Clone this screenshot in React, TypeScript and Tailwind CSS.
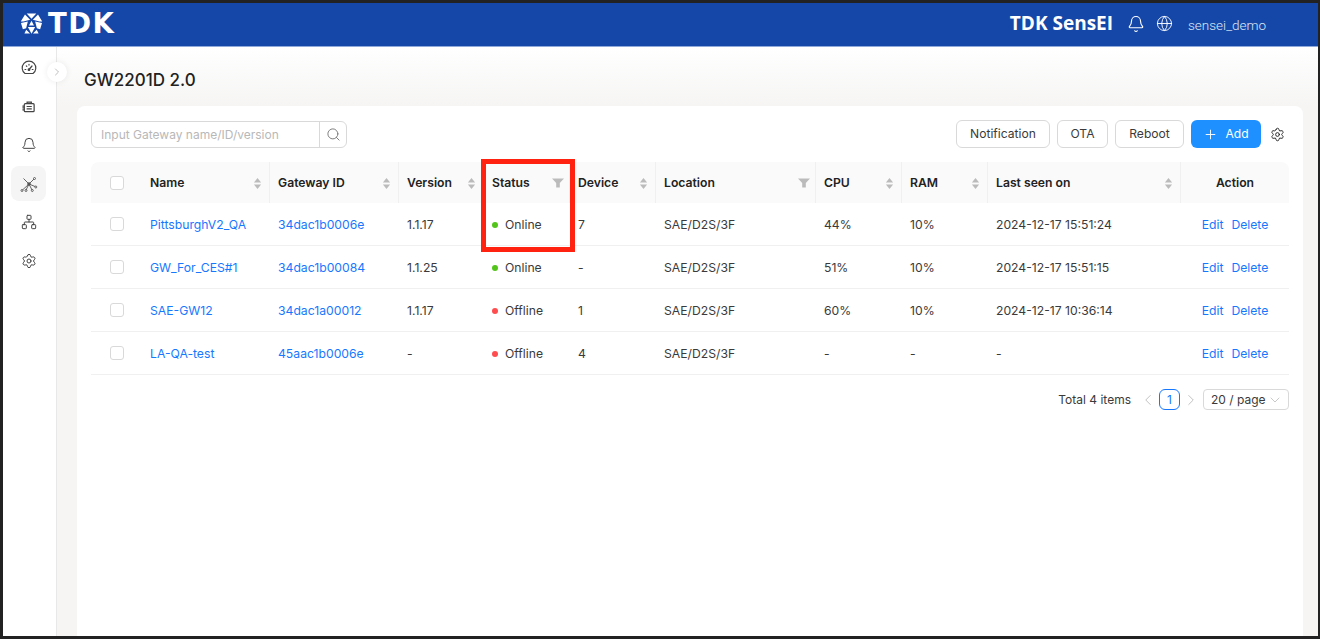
import { Bell, ChevronDown, ChevronLeft, ChevronRight, Globe, Network, Plus, Search, Settings } from "lucide-react"

const inter = "font-['Inter',sans-serif]"

const columns = [
  { title: "Name", width: "w-[128px]", sort: true },
  { title: "Gateway ID", width: "w-[129px]", sort: true },
  { title: "Version", width: "w-[85px]", sort: true },
  { title: "Status", width: "w-[86px]", filter: true },
  { title: "Device", width: "w-[86px]", sort: true },
  { title: "Location", width: "w-[160px]", filter: true },
  { title: "CPU", width: "w-[86px]", sort: true },
  { title: "RAM", width: "w-[86px]", sort: true },
  { title: "Last seen on", width: "w-[193px]", sort: true },
]

const rows = [
  { name: "PittsburghV2_QA", id: "34dac1b0006e", version: "1.1.17", online: true, device: "7", cpu: "44%", ram: "10%", seen: "2024-12-17 15:51:24" },
  { name: "GW_For_CES#1", id: "34dac1b00084", version: "1.1.25", online: true, device: "-", cpu: "51%", ram: "10%", seen: "2024-12-17 15:51:15" },
  { name: "SAE-GW12", id: "34dac1a00012", version: "1.1.17", online: false, device: "1", cpu: "60%", ram: "10%", seen: "2024-12-17 10:36:14" },
  { name: "LA-QA-test", id: "45aac1b0006e", version: "-", online: false, device: "4", cpu: "-", ram: "-", seen: "-" },
]

function TdkMark() {
  return (
    <svg viewBox="0 0 24 24" className="w-[23px] h-[23px] text-white" fill="currentColor">
      <path d="M7 1.500h10l-5 5.500zM5.200 2.600l5.400 5.600-7 1.600-2.800.2zM18.800 2.600l-5.400 5.600 7 1.600 2.800.2zM1 11.500l7.200-1.600L6.400 17 3 18zM23 11.500l-7.200-1.600 1.800 7.100 3.400 1zM12 9l2.600 5H9.400zM8.200 15.600h7.600l-3.800 7zM6.500 18.400l4 4.100H4.600zM17.500 18.400l-4 4.100h5.900z" />
    </svg>
  )
}

function GaugeIcon() {
  return (
    <svg viewBox="0 0 16 16" className="w-[16px] h-[16px] text-[#444]" fill="none" stroke="currentColor" strokeWidth="1.200" strokeLinecap="round">
      <path d="M4 13.500a6.800 6.800 0 1 1 8 0z" />
      <path d="M8 9.500l3-3.500M4 9.500h.8M11.200 9.500h.8M5.300 5.800l.5.500M8 4.400v.7" />
      <circle cx="8" cy="9.700" r=".8" fill="currentColor" />
    </svg>
  )
}

function GatewayIcon() {
  return (
    <svg viewBox="0 0 16 16" className="w-[15px] h-[15px] text-[#444]" fill="none" stroke="currentColor" strokeWidth="1.300">
      <rect x="3.500" y="5" width="10.500" height="8.500" rx="1" />
      <path d="M6.500 5V3.300h4.500V5M1.500 7.500h2M1.500 9.500h2M1.500 11.500h2M6 8h5.500M6 10.500h5.500" />
    </svg>
  )
}

function TopologyIcon() {
  return (
    <svg viewBox="0 0 18 18" className="w-[18px] h-[18px] text-[#555]" fill="none" stroke="currentColor" strokeWidth="0.900">
      <path d="M3.500 3.500 9 9M14 4 9 9M2.500 15 9 9M6 15l3-6M12 15 9 9M15 11.500 9 9" />
      <circle cx="9" cy="9" r="1.300" fill="currentColor" />
      <circle cx="14.500" cy="3.500" r="1" />
      <circle cx="2" cy="15.500" r="1" />
      <circle cx="6" cy="15.500" r="1" />
      <circle cx="12.300" cy="15.500" r="1" />
      <circle cx="15.800" cy="12" r="1" />
    </svg>
  )
}

function SortCarets() {
  return (
    <svg viewBox="0 0 10 14" className="w-[9px] h-[13px] -mr-[1px] text-[#bbbbbb]" fill="currentColor">
      <path d="M5 1l4 5H1zM5 13 1 8h8z" />
    </svg>
  )
}

function FilterIcon() {
  return (
    <svg viewBox="0 0 12 10" className="w-[12px] h-[10px] -mr-[3px] text-[#bbbbbb]" fill="currentColor">
      <path d="M0 .500h12L7.800 5v4.500H4.200V5z" />
    </svg>
  )
}

function Checkbox() {
  return <span className="block w-[14px] h-[14px] rounded-[3px] border border-[#d9d9d9] bg-white" />
}

function SideItem({ children, active }: { children: React.ReactNode; active?: boolean }) {
  return (
    <div className={`w-[35px] h-[35px] rounded-lg flex items-center justify-center ${active ? "bg-[#f5f5f5]" : ""}`}>
      {children}
    </div>
  )
}

export default function App() {
  return (
    <div className={`w-[1320px] h-[639px] overflow-hidden bg-[#222222] pt-[3px] pl-[3px] pr-[2px] pb-[3px] ${inter}`}>
      <div className="h-full flex flex-col bg-white">
        <header className="h-[44px] shrink-0 bg-[#1447a8] border-b border-[#8fa9da] flex items-center justify-between pl-[17px] pr-[52px] pb-[2px]">
          <div className="flex items-center gap-[5px]">
            <TdkMark />
            <span className="font-['DejaVu_Sans',sans-serif] font-bold text-[27.500px] leading-none tracking-[1.500px] text-white">TDK</span>
          </div>
          <div className="flex items-center text-white">
            <span className="font-['Open_Sans',sans-serif] font-bold text-[19px] mr-[14px]">TDK SensEI</span>
            <Bell className="w-[18px] h-[18px] mr-[11px]" strokeWidth={1.500} />
            <Globe className="w-[17px] h-[17px] mr-[15px]" strokeWidth={1.300} />
            <span className="mt-[3px] font-['Roboto',sans-serif] font-light text-[13.500px] text-[#dfe7f6]">sensei_demo</span>
          </div>
        </header>

        <div className="flex-1 flex min-h-0 relative">
          <aside className="w-[54px] shrink-0 bg-white border-r border-[#e8e8e8] flex flex-col items-center pt-[3.500px] pr-[2px]">
            <div className="flex flex-col items-center gap-[3.500px]">
              <SideItem><GaugeIcon /></SideItem>
              <SideItem><GatewayIcon /></SideItem>
              <SideItem><Bell className="w-[16px] h-[16px] text-[#444]" strokeWidth={1.500} /></SideItem>
              <SideItem active><TopologyIcon /></SideItem>
              <SideItem><Network className="w-[16px] h-[16px] text-[#444]" strokeWidth={1.500} /></SideItem>
              <SideItem><Settings className="w-[16px] h-[16px] text-[#444]" strokeWidth={1.500} /></SideItem>
            </div>
          </aside>

          <button className="absolute left-[44px] top-[15px] w-[20px] h-[20px] rounded-full bg-white shadow-[0_0_6px_rgba(0,0,0,0.08)] flex items-center justify-center">
            <ChevronRight className="w-[12px] h-[12px] text-[#a8a8a8]" strokeWidth={1.500} />
          </button>

          <main className="flex-1 min-w-0 bg-[#f6f5f4] flex flex-col">
            <div className="h-[59px] shrink-0 bg-gradient-to-b from-white to-[#f6f5f4] pl-[27px] pt-[20px]">
              <h1 className="text-[17px] leading-[26px] font-medium text-[#222]">GW2201D 2.0</h1>
            </div>
            <div className="flex-1 ml-[20px] mr-[15px] bg-white rounded-t-lg px-[14px] pt-[14px]">
              <div className="flex items-center justify-between h-[28px]">
                <div className="flex w-[256px] h-[27px] border border-[#d9d9d9] rounded-md">
                  <span className="flex-1 pl-[9px] text-[12px] leading-[25px] text-[#b8b8b8]">Input Gateway name/ID/version</span>
                  <span className="w-[27px] border-l border-[#d9d9d9] flex items-center justify-center">
                    <Search className="w-[15px] h-[15px] text-[#777]" strokeWidth={1.500} />
                  </span>
                </div>
                <div className="flex items-center gap-[7px] mr-[4px] text-[12.100px] text-[#3a3a3a]">
                  <button className="h-[28px] w-[94px] rounded-md border border-[#d9d9d9] bg-white">Notification</button>
                  <button className="h-[28px] w-[51px] rounded-md border border-[#d9d9d9] bg-white">OTA</button>
                  <button className="h-[28px] w-[69px] rounded-md border border-[#d9d9d9] bg-white">Reboot</button>
                  <button className="h-[28px] w-[70px] rounded-md bg-[#1e90ff] text-white flex items-center justify-center gap-[7px]">
                    <Plus className="w-[15px] h-[15px]" strokeWidth={1.500} />
                    Add
                  </button>
                  <Settings className="w-[15px] h-[15px] ml-[2px] text-[#222]" strokeWidth={1.500} />
                </div>
              </div>

              <div className="relative mt-[14px]">
                <table className="w-[1198px] table-fixed border-separate border-spacing-0 text-[12.200px] text-[#3a3a3a]">
                  <thead>
                    <tr className="h-[41px] bg-[#fafafa]">
                      <th className="w-[51px] pl-[19px] rounded-tl-lg"><Checkbox /></th>
                      {columns.map((col) => (
                        <th key={col.title} className={`${col.width} px-[8px] pt-[2px] text-left font-semibold text-[#222] border-r border-[#f0f0f0]`}>
                          <div className="flex items-center justify-between">
                            <span>{col.title}</span>
                            {col.sort && <SortCarets />}
                            {col.filter && <FilterIcon />}
                          </div>
                        </th>
                      ))}
                      <th className="w-[108px] pt-[2px] text-center font-semibold text-[#222] rounded-tr-lg">Action</th>
                    </tr>
                  </thead>
                  <tbody className="[&_td]:border-b [&_td]:border-[#f0f0f0]">
                    {rows.map((row) => (
                      <tr key={row.name} className="h-[43px]">
                        <td className="pl-[19px]"><Checkbox /></td>
                        <td className="px-[8px] pt-[2px] text-[#1677ff] whitespace-nowrap">{row.name}</td>
                        <td className="px-[8px] pt-[2px] text-[#1677ff]">{row.id}</td>
                        <td className="px-[8px] pt-[2px]">{row.version}</td>
                        <td className="px-[8px] pt-[2px]">
                          <span className="flex items-center gap-[7px]">
                            <span className={`w-[6px] h-[6px] rounded-full ${row.online ? "bg-[#52c41a]" : "bg-[#ff4d4f]"}`} />
                            {row.online ? "Online" : "Offline"}
                          </span>
                        </td>
                        <td className="px-[8px] pt-[2px]">{row.device}</td>
                        <td className="px-[8px] pt-[2px]">SAE/D2S/3F</td>
                        <td className="px-[8px] pt-[2px]">{row.cpu}</td>
                        <td className="px-[8px] pt-[2px]">{row.ram}</td>
                        <td className="px-[8px] pt-[2px]">{row.seen}</td>
                        <td className="pt-[2px] text-center text-[#1677ff]">
                          <span className="mr-[8px]">Edit</span>
                          <span>Delete</span>
                        </td>
                      </tr>
                    ))}
                  </tbody>
                </table>
                <div className="absolute left-[390px] top-[-3px] w-[94px] h-[93px] border-[5px] border-[#ff2211]" />
              </div>

              <div className="w-[1198px] flex items-center justify-end mt-[14px] text-[12px] text-[#3a3a3a]">
                <span className="mr-[8px]">Total 4 items</span>
                <ChevronLeft className="w-[18px] h-[18px] text-[#bbb] mr-[2px]" strokeWidth={1.200} />
                <span className="w-[21px] h-[21px] rounded-md border border-[#1677ff] text-[#1677ff] flex items-center justify-center">1</span>
                <ChevronRight className="w-[18px] h-[18px] text-[#bbb] ml-[2px] mr-[3px]" strokeWidth={1.200} />
                <span className="w-[86px] h-[21px] rounded border border-[#d9d9d9] flex items-center justify-between pl-[7px] pr-[5px]">
                  20 / page
                  <ChevronDown className="w-[16px] h-[16px] text-[#bbb]" strokeWidth={1.200} />
                </span>
              </div>
            </div>
          </main>
        </div>
      </div>
    </div>
  )
}
